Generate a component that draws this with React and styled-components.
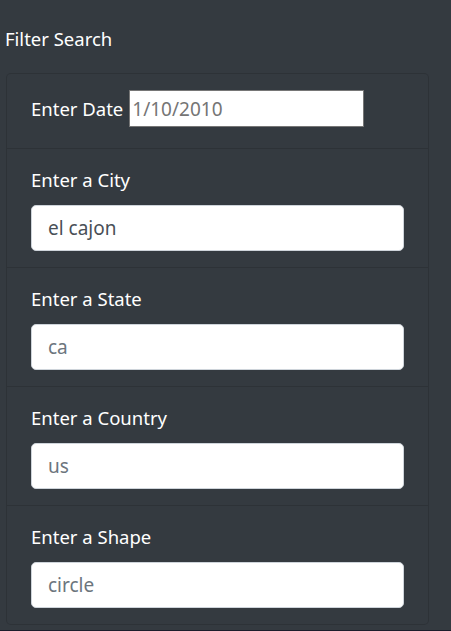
import React from 'react';
import styled, { createGlobalStyle } from 'styled-components';

const Global = createGlobalStyle`
  html, body {
    margin: 0;
    padding: 0;
    background: #1c1d2b;
  }
  body {
    font-family: "Noto Sans", "Open Sans", sans-serif;
  }
`;

const Page = styled.main`
  background: #343a40;
  height: 630px;
  padding: 24px 22px 0 6px;
  box-sizing: border-box;
  color: #fff;
`;

const Heading = styled.h5`
  margin: 0 0 20px -1px;
  font-size: 18.5px;
  font-weight: 400;
  line-height: 29px;
`;

const Card = styled.div`
  border: 1px solid rgba(0, 0, 0, 0.13);
  border-radius: 5px;
  background: #343a40;
`;

const Item = styled.div`
  padding: 16px 24px;
  & + & {
    border-top: 1px solid rgba(0, 0, 0, 0.13);
  }
`;

const DateRow = styled.div`
  display: flex;
  align-items: flex-start;
  gap: 6px;
  min-height: 42px;
`;

const Label = styled.label`
  display: block;
  font-size: 18.5px;
  line-height: 29px;
  margin-bottom: ${p => (p.$inline ? '0' : '11px')};
  padding-top: ${p => (p.$inline ? '4px' : '0')};
  white-space: nowrap;
`;

const DateInput = styled.input`
  width: 235px;
  height: 37px;
  box-sizing: border-box;
  border: 1px solid #767676;
  border-radius: 0;
  padding: 0 2px;
  font: inherit;
  font-size: 19px;
  color: #757575;
  background: #fff;
  outline: none;
  &::placeholder {
    color: #757575;
    opacity: 1;
  }
`;

const TextInput = styled.input`
  display: block;
  width: 100%;
  height: 46px;
  box-sizing: border-box;
  border: 1px solid #ced4da;
  border-radius: 5px;
  padding: 0 16px;
  font: inherit;
  font-size: 19px;
  color: #495057;
  background: #fff;
  outline: none;
  &::placeholder {
    color: #6c757d;
    opacity: 1;
  }
`;

const fields = [
  { id: 'city', label: 'Enter a City', value: 'el cajon' },
  { id: 'state', label: 'Enter a State', placeholder: 'ca' },
  { id: 'country', label: 'Enter a Country', placeholder: 'us' },
  { id: 'shape', label: 'Enter a Shape', placeholder: 'circle' },
];

export default function App() {
  return (
    <Page>
      <Global />
      <Heading>Filter Search</Heading>
      <Card>
        <Item>
          <DateRow>
            <Label $inline htmlFor="date">Enter Date</Label>
            <DateInput id="date" type="text" placeholder="1/10/2010" />
          </DateRow>
        </Item>
        {fields.map(f => (
          <Item key={f.id}>
            <Label htmlFor={f.id}>{f.label}</Label>
            <TextInput
              id={f.id}
              type="text"
              defaultValue={f.value}
              placeholder={f.placeholder}
            />
          </Item>
        ))}
      </Card>
    </Page>
  );
}
